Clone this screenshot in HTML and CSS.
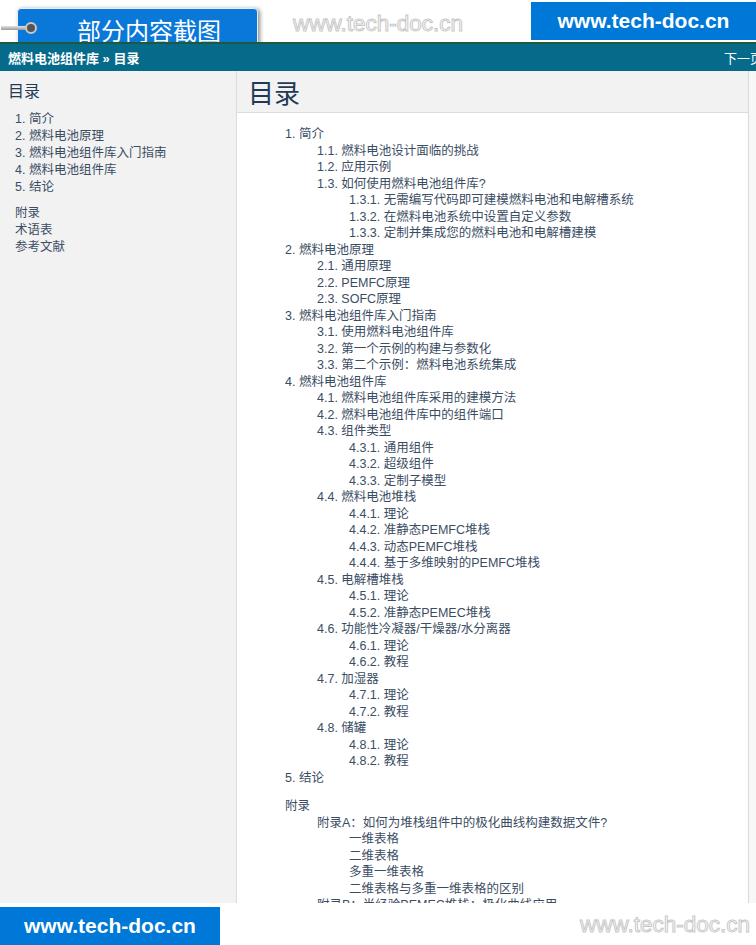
FILE: index.html
```html
<!DOCTYPE html>
<html lang="zh-CN">

<head>
    <meta charset="UTF-8">
    <meta name="viewport" content="width=device-width, initial-scale=1.0">
    <title>目录</title>
    <link rel="stylesheet" href="styles.css">
</head>

<body>
    <!-- Top strip with badge and watermark -->
    <div class="top-strip">
        <div class="badge">
            <span class="badge-ring"></span>
            <span class="badge-text">部分内容截图</span>
        </div>
        <span class="watermark">www.tech-doc.cn</span>
        <div class="site-box site-box-top">www.tech-doc.cn</div>
    </div>

    <!-- Navigation bar -->
    <div class="navbar">
        <span class="crumbs">燃料电池组件库 » 目录</span>
        <span class="next">下一页</span>
    </div>

    <div class="page">
        <!-- Sidebar -->
        <div class="sidebar">
            <h3>目录</h3>
            <ul class="side-list">
                <li>1. 简介</li>
                <li>2. 燃料电池原理</li>
                <li>3. 燃料电池组件库入门指南</li>
                <li>4. 燃料电池组件库</li>
                <li>5. 结论</li>
            </ul>
            <ul class="side-list side-extra">
                <li>附录</li>
                <li>术语表</li>
                <li>参考文献</li>
            </ul>
        </div>

        <!-- Main content -->
        <div class="main">
            <div class="title-bar">
                <h1>目录</h1>
            </div>
            <ul class="toc">
                <li>1. 简介
                    <ul>
                        <li>1.1. 燃料电池设计面临的挑战</li>
                        <li>1.2. 应用示例</li>
                        <li>1.3. 如何使用燃料电池组件库?
                            <ul>
                                <li>1.3.1. 无需编写代码即可建模燃料电池和电解槽系统</li>
                                <li>1.3.2. 在燃料电池系统中设置自定义参数</li>
                                <li>1.3.3. 定制并集成您的燃料电池和电解槽建模</li>
                            </ul>
                        </li>
                    </ul>
                </li>
                <li>2. 燃料电池原理
                    <ul>
                        <li>2.1. 通用原理</li>
                        <li>2.2. PEMFC原理</li>
                        <li>2.3. SOFC原理</li>
                    </ul>
                </li>
                <li>3. 燃料电池组件库入门指南
                    <ul>
                        <li>3.1. 使用燃料电池组件库</li>
                        <li>3.2. 第一个示例的构建与参数化</li>
                        <li>3.3. 第二个示例：燃料电池系统集成</li>
                    </ul>
                </li>
                <li>4. 燃料电池组件库
                    <ul>
                        <li>4.1. 燃料电池组件库采用的建模方法</li>
                        <li>4.2. 燃料电池组件库中的组件端口</li>
                        <li>4.3. 组件类型
                            <ul>
                                <li>4.3.1. 通用组件</li>
                                <li>4.3.2. 超级组件</li>
                                <li>4.3.3. 定制子模型</li>
                            </ul>
                        </li>
                        <li>4.4. 燃料电池堆栈
                            <ul>
                                <li>4.4.1. 理论</li>
                                <li>4.4.2. 准静态PEMFC堆栈</li>
                                <li>4.4.3. 动态PEMFC堆栈</li>
                                <li>4.4.4. 基于多维映射的PEMFC堆栈</li>
                            </ul>
                        </li>
                        <li>4.5. 电解槽堆栈
                            <ul>
                                <li>4.5.1. 理论</li>
                                <li>4.5.2. 准静态PEMEC堆栈</li>
                            </ul>
                        </li>
                        <li>4.6. 功能性冷凝器/干燥器/水分离器
                            <ul>
                                <li>4.6.1. 理论</li>
                                <li>4.6.2. 教程</li>
                            </ul>
                        </li>
                        <li>4.7. 加湿器
                            <ul>
                                <li>4.7.1. 理论</li>
                                <li>4.7.2. 教程</li>
                            </ul>
                        </li>
                        <li>4.8. 储罐
                            <ul>
                                <li>4.8.1. 理论</li>
                                <li>4.8.2. 教程</li>
                            </ul>
                        </li>
                    </ul>
                </li>
                <li>5. 结论</li>
            </ul>
            <ul class="toc toc-extra">
                <li>附录
                    <ul>
                        <li>附录A：如何为堆栈组件中的极化曲线构建数据文件?
                            <ul>
                                <li>一维表格</li>
                                <li>二维表格</li>
                                <li>多重一维表格</li>
                                <li>二维表格与多重一维表格的区别</li>
                            </ul>
                        </li>
                        <li>附录B：半经验PEMEC堆栈：极化曲线应用</li>
                    </ul>
                </li>
            </ul>
        </div>
        <div class="scroll-strip"></div>
    </div>

    <!-- Bottom strip -->
    <div class="bottom-strip">
        <div class="site-box site-box-bottom">www.tech-doc.cn</div>
        <span class="watermark watermark-bottom">www.tech-doc.cn</span>
    </div>
</body>

</html>
```

FILE: styles.css
```css
/* Page base */
body {
    margin: 0;
    width: 756px;
    height: 945px;
    overflow: hidden;
    background: #fff;
    font-family: "Liberation Sans", Arial, "Noto Sans CJK SC", sans-serif;
}

ul {
    list-style: none;
    margin: 0;
    padding: 0;
}

/* Top strip */
.top-strip {
    position: relative;
    height: 42px;
}

.badge {
    position: absolute;
    left: 17px;
    top: 8px;
    width: 241px;
    height: 44px;
    background: #0a78d8;
    border: 1px solid #e8eef6;
    border-radius: 4px;
    box-shadow: 2px 1px 4px rgba(0, 0, 0, 0.45);
    box-sizing: border-box;
}

.badge-ring {
    position: absolute;
    left: -17px;
    top: 17px;
    width: 32px;
    height: 4px;
    background: linear-gradient(#e2e2e2, #9a9a9a);
}

.badge-ring::after {
    content: "";
    position: absolute;
    right: -4px;
    top: -4px;
    width: 8px;
    height: 8px;
    border-radius: 50%;
    background: #555;
    border: 2px solid #c9c9c9;
}

.badge-text {
    position: absolute;
    left: 59px;
    top: 6px;
    color: #fff;
    font-size: 24px;
    line-height: 30px;
    font-family: "Noto Sans CJK SC", sans-serif;
}

.watermark {
    position: absolute;
    left: 293px;
    top: 9px;
    font-size: 22.5px;
    line-height: 30px;
    white-space: nowrap;
    color: #fff;
    -webkit-text-stroke: 1px #c8c8c8;
}

.site-box {
    position: absolute;
    background: #0078d7;
    color: #fff;
    font-weight: bold;
    font-size: 21px;
    display: flex;
    align-items: center;
    justify-content: center;
}

.site-box-top {
    left: 531px;
    top: 2px;
    width: 225px;
    height: 38px;
}

/* Navigation bar */
.navbar {
    position: relative;
    z-index: 2;
    height: 27px;
    background: #066b8b;
    border-top: 2px solid #1d5a3a;
    display: flex;
    align-items: center;
    justify-content: space-between;
    padding-left: 8px;
    color: #fff;
    font-size: 13px;
    font-family: "Liberation Sans", "Noto Sans CJK SC", sans-serif;
}

.crumbs {
    font-weight: bold;
}

.next {
    margin-right: -7px;
}

/* Body columns */
.page {
    display: flex;
    height: 832px;
    overflow: hidden;
    color: #3b4d63;
    font-size: 12.5px;
}

.sidebar {
    width: 237px;
    flex-shrink: 0;
    background: #f2f2f2;
    border-right: 1px solid #dcdcdc;
    padding: 11px 0 0 8px;
    box-sizing: border-box;
}

.sidebar h3 {
    margin: 0 0 9px;
    font-size: 16px;
    line-height: 20px;
    font-weight: normal;
    color: #253b52;
}

.side-list {
    padding-left: 7px;
}

.side-list li {
    line-height: 17px;
}

.side-extra {
    margin-top: 9px;
}

.main {
    flex: 1;
    min-width: 0;
}

.title-bar {
    height: 41px;
    background: #f2f2f2;
    border-bottom: 1px solid #dcdcdc;
    padding-left: 11px;
    display: flex;
    align-items: center;
}

.title-bar h1 {
    margin: 0;
    font-size: 26px;
    line-height: 30px;
    font-weight: normal;
    color: #1e3a56;
    font-family: "Noto Sans CJK SC", sans-serif;
}

.toc {
    padding: 13px 0 0 48px;
}

.toc li {
    line-height: 16.5px;
    white-space: nowrap;
}

.toc ul {
    padding-left: 32px;
}

.toc-extra {
    padding-top: 12px;
}

.scroll-strip {
    width: 7px;
    flex-shrink: 0;
    border-left: 1px solid #dadada;
    background: #f7f7f7;
}

/* Bottom strip */
.bottom-strip {
    position: relative;
    height: 42px;
}

.site-box-bottom {
    left: 0;
    top: 4px;
    width: 220px;
    height: 38px;
}

.watermark-bottom {
    left: 580px;
    top: 7px;
}
```
